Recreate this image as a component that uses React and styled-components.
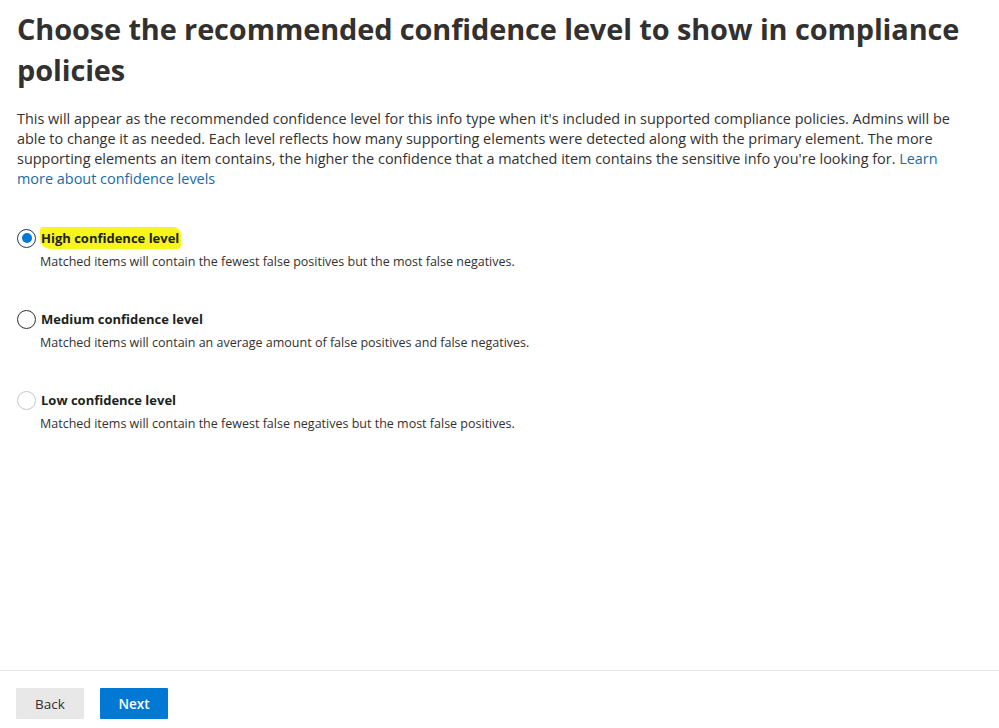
import React, { useState } from "react";
import styled, { createGlobalStyle } from "styled-components";

const GlobalStyle = createGlobalStyle`
  html, body {
    margin: 0;
    padding: 0;
    background: #fff;
  }
  body {
    font-family: "Open Sans", "Noto Sans", sans-serif;
    color: #323130;
  }
`;

const Page = styled.div`
  display: flex;
  flex-direction: column;
  min-height: 728px;
  width: 999px;
`;

const Content = styled.main`
  flex: 1;
  padding: 8px 10px 0 17px;
`;

const Title = styled.h1`
  margin: 0;
  font-size: 28.9px;
  line-height: 41px;
  font-weight: 700;
  color: #323130;
  letter-spacing: -0.1px;
`;

const Desc = styled.p`
  margin: 19px 0 0;
  max-width: 940px;
  font-size: 14.45px;
  line-height: 20px;
  color: #323130;
`;

const Link = styled.a`
  color: #1a6aa8;
  text-decoration: none;
`;

const Options = styled.div`
  display: flex;
  flex-direction: column;
  gap: 38px;
  margin-top: 38px;
`;

const Option = styled.label`
  display: grid;
  grid-template-columns: 19px 1fr;
  column-gap: 5px;
  row-gap: 5px;
  align-items: center;
  cursor: pointer;
`;

const Circle = styled.span`
  width: 19px;
  height: 19px;
  box-sizing: border-box;
  border-radius: 50%;
  border: 1px solid ${({ checked, muted }) => (checked ? "#1d3a5c" : muted ? "#c8c6c4" : "#323130")};
  display: flex;
  align-items: center;
  justify-content: center;
  &::after {
    content: "";
    width: 10px;
    height: 10px;
    border-radius: 50%;
    background: ${({ checked }) => (checked ? "#0078d4" : "transparent")};
  }
`;

const Label = styled.span`
  font-size: 13px;
  font-weight: 700;
  color: #201f1e;
  line-height: 18px;
  justify-self: start;
  padding: 2px 2px 2px 1px;
  margin-left: -1px;
  border-radius: 3px 8px 4px 10px;
  background: ${({ marked }) => (marked ? "#f7f51a" : "transparent")};
`;

const OptionDesc = styled.span`
  grid-column: 2;
  font-size: 12.5px;
  line-height: 16px;
  color: #323130;
  margin-left: -1px;
`;

const Footer = styled.footer`
  border-top: 1px solid #e6e6e6;
  padding: 17px 16px 9px;
  display: flex;
  gap: 16px;
`;

const Button = styled.button`
  height: 31px;
  min-width: 68px;
  padding: 0 16px;
  border: none;
  border-radius: 1px;
  font-family: "Open Sans", "Noto Sans", sans-serif;
  font-size: 13.5px;
  font-weight: ${({ primary }) => (primary ? 600 : 400)};
  color: ${({ primary }) => (primary ? "#fff" : "#323130")};
  background: ${({ primary }) => (primary ? "#0078d4" : "#e8e8e8")};
  cursor: pointer;
`;

const levels = [
  {
    id: "high",
    label: "High confidence level",
    desc: "Matched items will contain the fewest false positives but the most false negatives.",
  },
  {
    id: "medium",
    label: "Medium confidence level",
    desc: "Matched items will contain an average amount of false positives and false negatives.",
  },
  {
    id: "low",
    label: "Low confidence level",
    desc: "Matched items will contain the fewest false negatives but the most false positives.",
    muted: true,
  },
];

const App = () => {
  const [level, setLevel] = useState("high");

  return (
    <Page>
      <GlobalStyle />
      <Content>
        <Title>Choose the recommended confidence level to show in compliance policies</Title>
        <Desc>
          This will appear as the recommended confidence level for this info type when it's included in
          supported compliance policies. Admins will be able to change it as needed. Each level reflects how
          many supporting elements were detected along with the primary element. The more supporting
          elements an item contains, the higher the confidence that a matched item contains the sensitive
          info you're looking for. <Link href="#">Learn more about confidence levels</Link>
        </Desc>
        <Options>
          {levels.map((l) => (
            <Option key={l.id} onClick={() => setLevel(l.id)}>
              <Circle checked={level === l.id} muted={l.muted} />
              <Label marked={l.id === "high"}>{l.label}</Label>
              <OptionDesc>{l.desc}</OptionDesc>
            </Option>
          ))}
        </Options>
      </Content>
      <Footer>
        <Button>Back</Button>
        <Button primary>Next</Button>
      </Footer>
    </Page>
  );
};

export default App;
